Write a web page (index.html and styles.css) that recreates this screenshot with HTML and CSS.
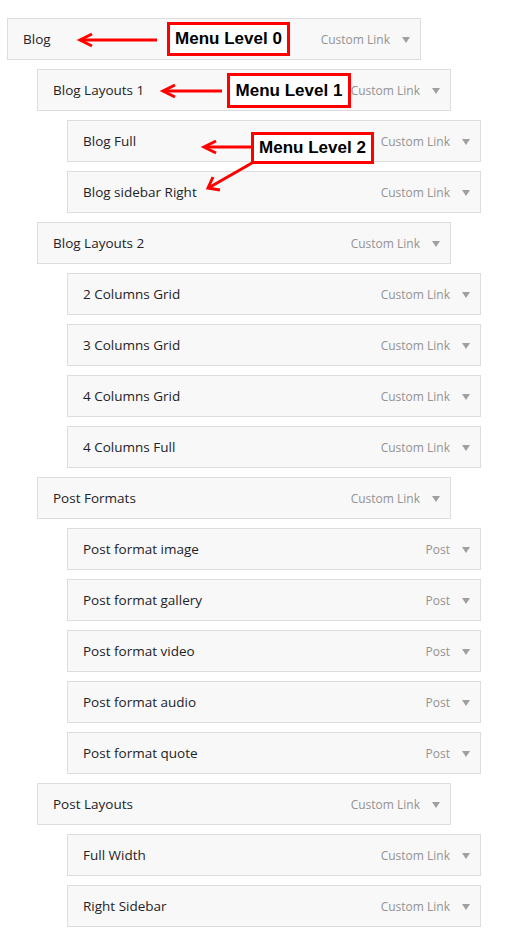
FILE: index.html
```html
<!DOCTYPE html>
<html>
<head>
<meta charset="utf-8">
<link rel="stylesheet" href="styles.css">
</head>
<body>
<div class="page">
  <div class="menu">
    <div class="item d0"><span class="title">Blog</span><span class="controls"><span class="type">Custom Link</span><span class="caret"></span></span></div>
    <div class="item d1"><span class="title">Blog Layouts 1</span><span class="controls"><span class="type">Custom Link</span><span class="caret"></span></span></div>
    <div class="item d2"><span class="title">Blog Full</span><span class="controls"><span class="type">Custom Link</span><span class="caret"></span></span></div>
    <div class="item d2"><span class="title">Blog sidebar Right</span><span class="controls"><span class="type">Custom Link</span><span class="caret"></span></span></div>
    <div class="item d1"><span class="title">Blog Layouts 2</span><span class="controls"><span class="type">Custom Link</span><span class="caret"></span></span></div>
    <div class="item d2"><span class="title">2 Columns Grid</span><span class="controls"><span class="type">Custom Link</span><span class="caret"></span></span></div>
    <div class="item d2"><span class="title">3 Columns Grid</span><span class="controls"><span class="type">Custom Link</span><span class="caret"></span></span></div>
    <div class="item d2"><span class="title">4 Columns Grid</span><span class="controls"><span class="type">Custom Link</span><span class="caret"></span></span></div>
    <div class="item d2"><span class="title">4 Columns Full</span><span class="controls"><span class="type">Custom Link</span><span class="caret"></span></span></div>
    <div class="item d1"><span class="title">Post Formats</span><span class="controls"><span class="type">Custom Link</span><span class="caret"></span></span></div>
    <div class="item d2"><span class="title">Post format image</span><span class="controls"><span class="type">Post</span><span class="caret"></span></span></div>
    <div class="item d2"><span class="title">Post format gallery</span><span class="controls"><span class="type">Post</span><span class="caret"></span></span></div>
    <div class="item d2"><span class="title">Post format video</span><span class="controls"><span class="type">Post</span><span class="caret"></span></span></div>
    <div class="item d2"><span class="title">Post format audio</span><span class="controls"><span class="type">Post</span><span class="caret"></span></span></div>
    <div class="item d2"><span class="title">Post format quote</span><span class="controls"><span class="type">Post</span><span class="caret"></span></span></div>
    <div class="item d1"><span class="title">Post Layouts</span><span class="controls"><span class="type">Custom Link</span><span class="caret"></span></span></div>
    <div class="item d2"><span class="title">Full Width</span><span class="controls"><span class="type">Custom Link</span><span class="caret"></span></span></div>
    <div class="item d2"><span class="title">Right Sidebar</span><span class="controls"><span class="type">Custom Link</span><span class="caret"></span></span></div>
  </div>

  <svg class="arrows" width="515" height="220" viewBox="0 0 515 220">
    <g fill="none" stroke="#ff0000" stroke-width="3" stroke-linecap="butt" stroke-linejoin="miter">
      <line x1="81" y1="40" x2="157" y2="40"/>
      <polyline points="92,34 80,40 92,46"/>
      <line x1="164" y1="91" x2="222" y2="91"/>
      <polyline points="175,85 163,91 175,97"/>
      <line x1="205" y1="147" x2="251" y2="147"/>
      <polyline points="216,141 204,147 216,153"/>
      <line x1="252" y1="163" x2="210" y2="187"/>
      <polyline points="220,190 208,188 213,177"/>
    </g>
  </svg>
  <div class="label l0">Menu Level 0</div>
  <div class="label l1">Menu Level 1</div>
  <div class="label l2">Menu Level 2</div>
</div>
</body>
</html>
```

FILE: styles.css
```css
html, body {
  margin: 0;
  padding: 0;
  background: #ffffff;
}

.page {
  position: relative;
  width: 515px;
  height: 944px;
  overflow: hidden;
  padding: 18px 0 0 7px;
  box-sizing: border-box;
  font-family: "Open Sans", "Liberation Sans", sans-serif;
}

.menu {
  display: flex;
  flex-direction: column;
  gap: 9px;
}

.item {
  box-sizing: border-box;
  width: 414px;
  height: 42px;
  border: 1px solid #dddddd;
  background: #f8f8f8;
  display: flex;
  align-items: center;
  justify-content: space-between;
  padding: 0 10px 0 15px;
}

.d1 { margin-left: 30px; }
.d2 { margin-left: 60px; }

.title {
  font-size: 13.5px;
  font-weight: 500;
  color: #1d2327;
}

.controls {
  display: flex;
  align-items: center;
  gap: 12px;
}

.type {
  font-size: 12px;
  color: #939393;
}

.caret {
  width: 0;
  height: 0;
  border-left: 4px solid transparent;
  border-right: 4px solid transparent;
  border-top: 6px solid #a0a0a0;
  margin-top: 2px;
}

.arrows {
  position: absolute;
  left: 0;
  top: 0;
}

.label {
  position: absolute;
  box-sizing: border-box;
  border: 3px solid #ff0000;
  background: #ffffff;
  font-family: "Liberation Sans", Arial, sans-serif;
  font-weight: 700;
  font-size: 17px;
  color: #000000;
  display: flex;
  align-items: center;
  justify-content: center;
}

.l0 { left: 167px; top: 22px; width: 123px; height: 34px; }
.l1 { left: 227px; top: 73px; width: 124px; height: 35px; }
.l2 { left: 251px; top: 132px; width: 123px; height: 32px; }
```
